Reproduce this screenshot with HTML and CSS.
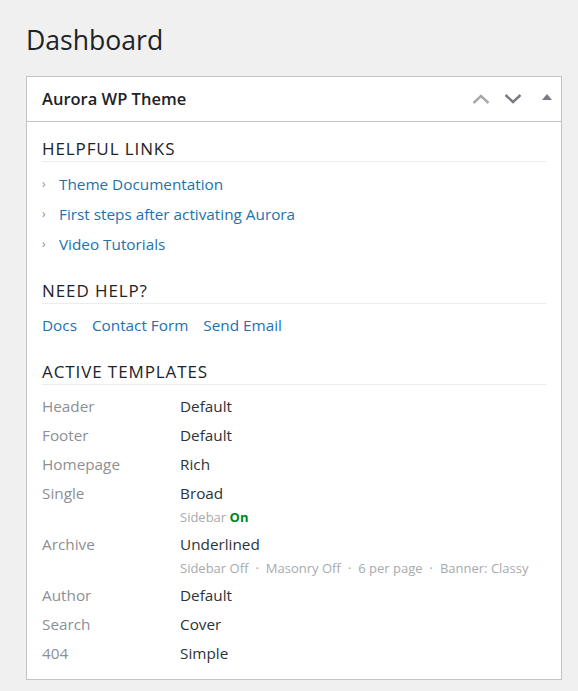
FILE: index.html
```html
<!DOCTYPE html>
<html lang="en">
<head>
<meta charset="utf-8">
<title>Dashboard</title>
<link rel="stylesheet" href="styles.css">
</head>
<body>
<div class="wrap">
  <h1 class="page-title">Dashboard</h1>
  <div class="postbox">
    <div class="postbox-header">
      <h2 class="postbox-title">Aurora WP Theme</h2>
      <div class="handle-actions">
        <span class="handle handle-up">
          <svg width="18" height="10" viewBox="0 0 18 10"><polyline points="1.5,9 9,2 16.5,9" fill="none" stroke="currentColor" stroke-width="2.4"/></svg>
        </span>
        <span class="handle handle-down">
          <svg width="18" height="10" viewBox="0 0 18 10"><polyline points="1.5,1 9,8 16.5,1" fill="none" stroke="currentColor" stroke-width="2.4"/></svg>
        </span>
        <span class="handle handle-toggle">
          <svg width="10" height="6" viewBox="0 0 10 6"><polygon points="0,6 5,0 10,6" fill="currentColor"/></svg>
        </span>
      </div>
    </div>
    <div class="inside">
      <h3 class="section-title">Helpful Links</h3>
      <ul class="link-list">
        <li><span class="bullet">›</span><a href="#">Theme Documentation</a></li>
        <li><span class="bullet">›</span><a href="#">First steps after activating Aurora</a></li>
        <li><span class="bullet">›</span><a href="#">Video Tutorials</a></li>
      </ul>

      <h3 class="section-title second">Need Help?</h3>
      <div class="help-links">
        <a href="#">Docs</a>
        <a href="#">Contact Form</a>
        <a href="#">Send Email</a>
      </div>

      <h3 class="section-title second">Active Templates</h3>
      <div class="templates">
        <div class="tpl-label">Header</div><div class="tpl-value">Default</div>
        <div class="tpl-label">Footer</div><div class="tpl-value">Default</div>
        <div class="tpl-label">Homepage</div><div class="tpl-value">Rich</div>
        <div class="tpl-label">Single</div>
        <div class="tpl-value">Broad
          <div class="tpl-meta">Sidebar <strong class="on">On</strong></div>
        </div>
        <div class="tpl-label">Archive</div>
        <div class="tpl-value">Underlined
          <div class="tpl-meta">Sidebar Off<span class="sep">·</span>Masonry Off<span class="sep">·</span>6 per page<span class="sep">·</span>Banner: Classy</div>
        </div>
        <div class="tpl-label">Author</div><div class="tpl-value">Default</div>
        <div class="tpl-label">Search</div><div class="tpl-value">Cover</div>
        <div class="tpl-label">404</div><div class="tpl-value">Simple</div>
      </div>
    </div>
  </div>
</div>
</body>
</html>
```
FILE: styles.css
```css
html, body {
  margin: 0;
  padding: 0;
  background: #f0f0f1;
}
body {
  font-family: "Open Sans", "Noto Sans", "Liberation Sans", sans-serif;
  color: #1d2327;
}
.wrap {
  padding: 0 16px 20px 26px;
}
.page-title {
  margin: 0;
  padding-top: 22px;
  font-size: 26.6px;
  font-weight: 400;
  line-height: 36px;
  color: #1d2327;
}
.postbox {
  margin-top: 18px;
  width: 534px;
  background: #fff;
  border: 1px solid #c3c4c7;
}
.postbox-header {
  display: flex;
  align-items: center;
  height: 44px;
  border-bottom: 1px solid #c3c4c7;
  padding-left: 15px;
}
.postbox-title {
  flex: 1;
  margin: 0;
  font-size: 16.5px;
  font-weight: 600;
  line-height: 22px;
}
.handle-actions {
  display: flex;
  align-items: center;
  padding-right: 9px;
}
.handle {
  display: flex;
  align-items: center;
}
.handle-up { color: #a7aaad; }
.handle-down { color: #787c82; margin-left: 14px; }
.handle-toggle { color: #787c82; margin-left: 20px; margin-top: -4px; }
.inside {
  padding: 16px 15px 11px 15px;
}
.section-title {
  margin: 0;
  font-size: 17px;
  font-weight: 400;
  line-height: 22px;
  letter-spacing: 0.9px;
  text-transform: uppercase;
  padding-bottom: 1px;
  border-bottom: 1px solid #ececec;
  color: #1d2327;
}
.section-title.second {
  margin-top: 21px;
}
.link-list {
  list-style: none;
  margin: 7px 0 0 0;
  padding: 0;
}
.link-list li {
  display: flex;
  align-items: center;
  line-height: 30px;
  font-size: 15.3px;
}
.bullet {
  width: 17px;
  color: #8c8f94;
  font-size: 12px;
}
a {
  color: #2271b1;
  text-decoration: none;
}
.help-links {
  display: flex;
  gap: 15px;
  margin-top: 6px;
  line-height: 30px;
  font-size: 15.3px;
}
.templates {
  display: grid;
  grid-template-columns: 138px 1fr;
  margin-top: 7px;
  font-size: 15.3px;
  line-height: 29px;
}
.tpl-label {
  color: #8c8f94;
}
.tpl-value {
  color: #2c3338;
}
.tpl-meta {
  font-size: 13px;
  line-height: 18px;
  color: #a7aaad;
  margin-bottom: 4px;
  white-space: nowrap;
}
.tpl-meta .on {
  color: #00861f;
  font-weight: 700;
}
.sep {
  margin: 0 7px;
}
```
